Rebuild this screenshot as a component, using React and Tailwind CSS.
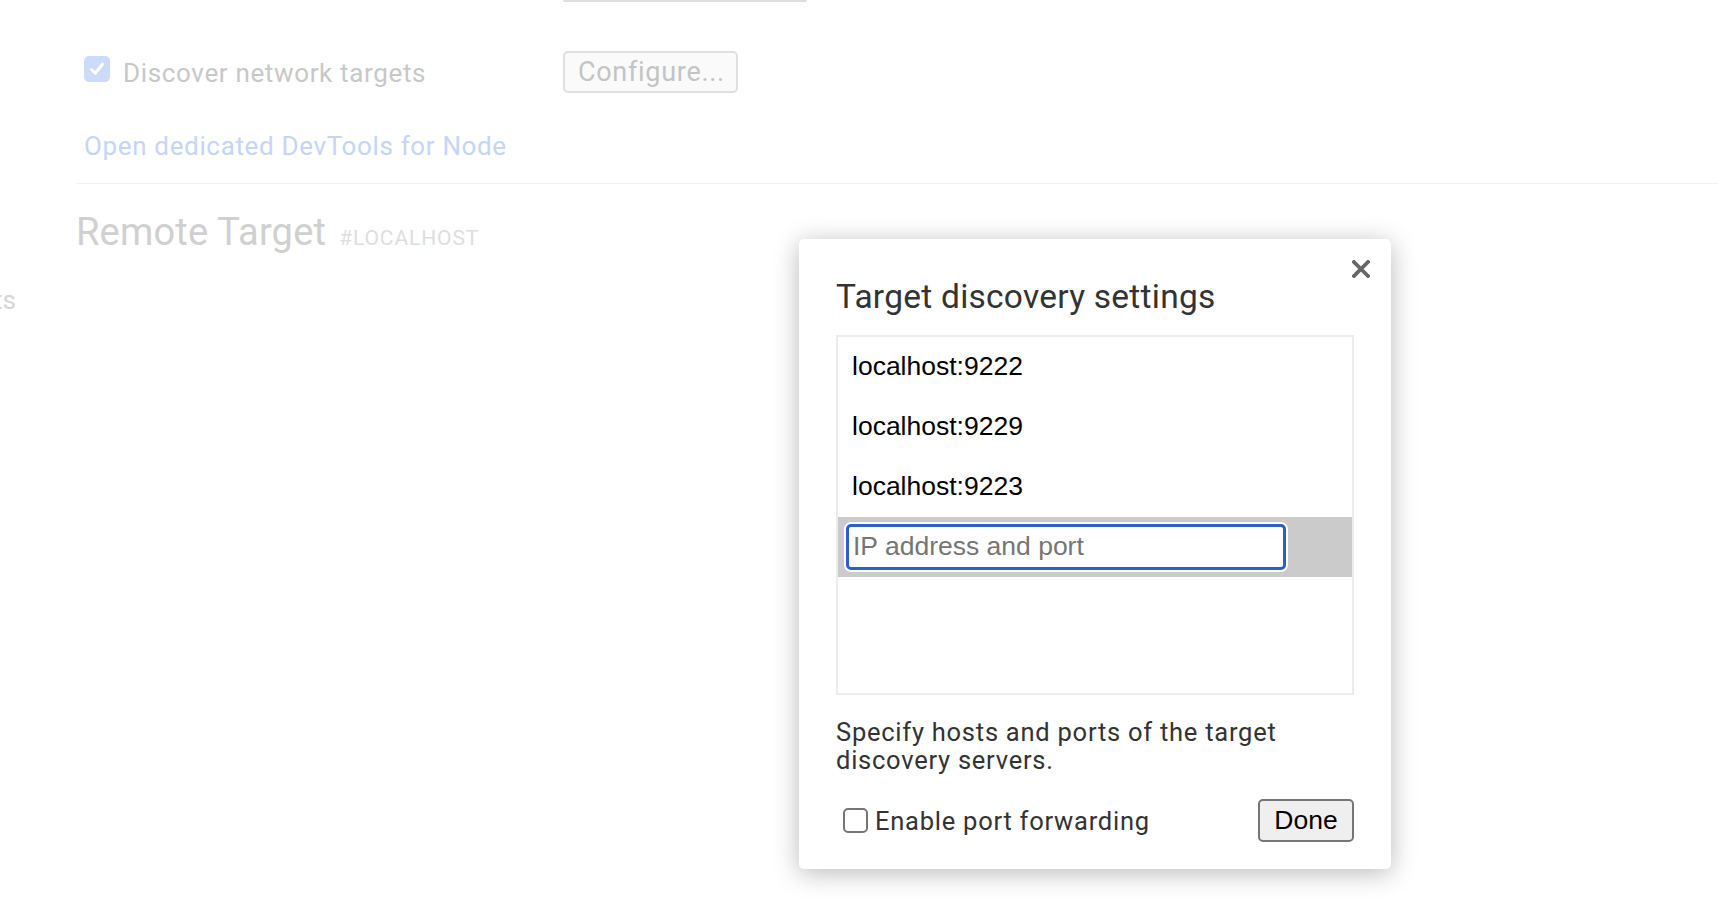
import React from "react";

const hosts = ["localhost:9222", "localhost:9229", "localhost:9223"];

const CloseIcon = () => (
  <svg width="18" height="18" viewBox="0 0 18 18" className="block">
    <path d="M2 2 L16 16 M16 2 L2 16" stroke="#666666" strokeWidth="3.8" strokeLinecap="square" />
  </svg>
);

const HostRow = ({ label }) => (
  <div className="flex h-[60px] items-center pl-[14px] font-['Liberation_Sans',Arial,sans-serif] text-[26.5px] text-black">
    {label}
  </div>
);

const DiscoveryDialog = () => (
  <div className="absolute left-[799px] top-[239px] w-[592px] rounded-[5px] bg-white px-[37px] pt-[38px] pb-[27px] shadow-[0_4px_26px_rgba(0,0,0,0.28)]">
    <button className="absolute right-[21px] top-[21px]">
      <CloseIcon />
    </button>
    <h2 className="text-[33.5px] leading-[40px] tracking-[0.25px] text-[#333]">Target discovery settings</h2>

    <div className="mt-[18px] h-[360px] border-2 border-[#ececec] bg-white">
      {hosts.map((h) => (
        <HostRow key={h} label={h} />
      ))}
      <div className="flex h-[60px] items-center bg-[#cbcbcb] pl-[8px]">
        <div className="flex h-[46px] w-[440px] items-center rounded-[5px] border-[3px] border-[#2b5fca] bg-white pl-[4px] shadow-[0_0_0_2px_#ffffff] font-['Liberation_Sans',Arial,sans-serif] text-[26.5px] text-[#757575]">
          IP address and port
        </div>
      </div>
    </div>

    <p className="mt-[23px] text-[25.5px] leading-[28px] tracking-[0.75px] text-[#333]">
      Specify hosts and ports of the target
      <br />
      discovery servers.
    </p>

    <div className="mt-[25px] flex h-[43px] items-center justify-between">
      <label className="flex items-center pl-[7px]">
        <span className="h-[25px] w-[25px] rounded-[5px] border-2 border-[#767676] bg-white" />
        <span className="ml-[7px] text-[25.5px] leading-[28px] tracking-[0.75px] text-[#333]">Enable port forwarding</span>
      </label>
      <button className="h-[43px] w-[96px] rounded-[5px] border-2 border-[#767676] bg-[#efefef] font-['Liberation_Sans',Arial,sans-serif] text-[26.5px] text-black">
        Done
      </button>
    </div>
  </div>
);

export default function App() {
  return (
    <div className="relative min-h-[922px] overflow-hidden bg-white font-['Roboto',sans-serif]">
      <div className="ml-[563px] h-[2px] w-[244px] rounded-b-[3px] border-x border-b-2 border-[#dedede]" />

      <div className="mt-[49px] flex pl-[84px]">
        <div className="flex w-[479px] items-start">
          <span className="mt-[5px] flex h-[26px] w-[26px] items-center justify-center rounded-[5px] bg-[#cddbfa]">
            <svg width="18" height="18" viewBox="0 0 18 18">
              <path d="M3.5 9.5 L7.2 13.2 L14.5 4.2" fill="none" stroke="#ffffff" strokeWidth="3" strokeLinecap="round" strokeLinejoin="round" />
            </svg>
          </span>
          <span className="ml-[13px] mt-[7px] text-[26px] leading-[30px] tracking-[0.65px] text-[#c8c8c8]">Discover network targets</span>
        </div>
        <button className="h-[42px] w-[175px] rounded-[5px] border-2 border-[#e0e0e0] bg-[#fafafa] pl-[13px] text-left text-[27px] leading-[30px] tracking-[0.7px] text-[#c4c4c4]">
          Configure...
        </button>
      </div>

      <div className="mt-[38px] pl-[84px] text-[26px] leading-[30px] tracking-[0.65px] text-[#c6d4f6]">Open dedicated DevTools for Node</div>

      <div className="ml-[76px] mt-[22px] h-px bg-[#f2f2f2]" />

      <div className="mt-[26px] flex items-baseline pl-[76px]">
        <span className="text-[38px] leading-[44px] tracking-[0.2px] text-[#d0d0d0]">Remote Target</span>
        <span className="ml-[13px] text-[21px] tracking-[0.9px] text-[#dedede]">#LOCALHOST</span>
      </div>

      <div className="mt-[30px] flex w-[16px] justify-end overflow-hidden whitespace-nowrap text-[26px] leading-[30px] text-[#d6d6d6]">
        ts
      </div>

      <DiscoveryDialog />
    </div>
  );
}
